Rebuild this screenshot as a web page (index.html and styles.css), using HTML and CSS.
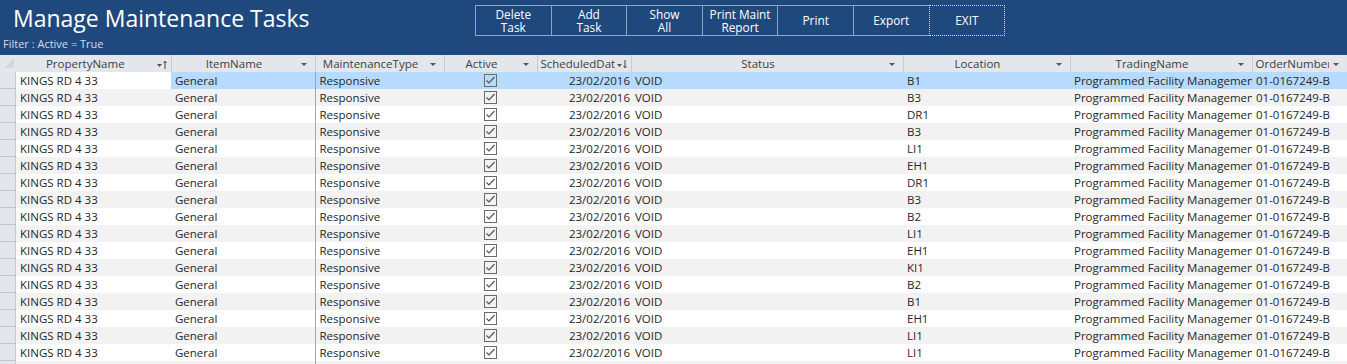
FILE: index.html
```html
<!DOCTYPE html>
<html lang="en">
<head>
  <meta charset="UTF-8" />
  <title>Manage Maintenance Tasks</title>
  <link rel="stylesheet" href="styles.css">
</head>
<body>
  <div class="header">
    <div class="titles">
      <h1>Manage Maintenance Tasks</h1>
      <div class="filter">Filter : Active = True</div>
    </div>
    <div class="buttons">
      <button>Delete<br>Task</button>
      <button>Add<br>Task</button>
      <button>Show<br>All</button>
      <button>Print Maint<br>Report</button>
      <button>Print</button>
      <button>Export</button>
      <button class="focused">EXIT</button>
    </div>
  </div>

  <table class="grid">
    <colgroup>
      <col style="width:16px">
      <col style="width:155px">
      <col style="width:144px">
      <col style="width:129px">
      <col style="width:93px">
      <col style="width:94px">
      <col style="width:272px">
      <col style="width:167px">
      <col style="width:182px">
      <col style="width:95px">
    </colgroup>
    <thead>
      <tr>
        <th class="corner"><svg width="16" height="16" viewBox="0 0 16 16"><polygon points="4,13 14,13 14,3" fill="#d4d7dc"/></svg></th>
        <th><div class="hd"><span class="lbl">PropertyName</span><svg class="sorter" width="11" height="9" viewBox="0 0 11 9"><polygon points="0,4 5,4 2.5,7" fill="#555"/><path d="M8 1.5V9M6.5 3L8 1.2 9.5 3" stroke="#444" fill="none"/></svg></div></th>
        <th><div class="hd"><span class="lbl">ItemName</span><i class="arr"></i></div></th>
        <th><div class="hd"><span class="lbl">MaintenanceType</span><i class="arr"></i></div></th>
        <th><div class="hd"><span class="lbl">Active</span><i class="arr"></i></div></th>
        <th><div class="hd"><span class="lbl clip">ScheduledDat</span><svg class="sorter" width="11" height="9" viewBox="0 0 11 9"><polygon points="0,4 5,4 2.5,7" fill="#555"/><path d="M8 0V7.5M6.5 6L8 7.8 9.5 6" stroke="#444" fill="none"/></svg></div></th>
        <th><div class="hd"><span class="lbl">Status</span><i class="arr"></i></div></th>
        <th><div class="hd"><span class="lbl">Location</span><i class="arr"></i></div></th>
        <th><div class="hd"><span class="lbl">TradingName</span><i class="arr"></i></div></th>
        <th><div class="hd"><span class="lbl clip">OrderNumber</span><i class="arr"></i></div></th>
      </tr>
    </thead>
    <tbody id="rows"></tbody>
  </table>

  <script>
    const lokasi = ["B1", "B3", "DR1", "B3", "LI1", "EH1", "DR1", "B3", "B2", "LI1", "EH1", "KI1", "B2", "B1", "EH1", "LI1", "LI1"];
    const tbody = document.getElementById("rows");
    const check = '<svg class="chk" width="13" height="13" viewBox="0 0 13 13"><rect x="0.5" y="0.5" width="12" height="12" fill="none" stroke="#6b6b6b"/><path d="M2.5 6.5L5 9 10.5 3" fill="none" stroke="#555" stroke-width="1.2"/></svg>';

    lokasi.forEach(function (loc, i) {
      const tr = document.createElement("tr");
      tr.className = i === 0 ? "selected" : (i % 2 ? "alt" : "");
      tr.innerHTML =
        '<td class="sel"></td>' +
        '<td class="' + (i === 0 ? "current" : "") + '">KINGS RD 4 33</td>' +
        '<td>General</td>' +
        '<td class="frozen">Responsive</td>' +
        '<td class="center">' + check + '</td>' +
        '<td class="right">23/02/2016</td>' +
        '<td>VOID</td>' +
        '<td>' + loc + '</td>' +
        '<td>Programmed Facility Management</td>' +
        '<td>01-0167249-B</td>';
      tbody.appendChild(tr);
    });

    // sisa baris yang terpotong di bawah
    const tail = document.createElement("tr");
    tail.className = "alt tail";
    tail.innerHTML = '<td class="sel"></td><td></td><td></td><td class="frozen"></td><td></td><td></td><td></td><td></td><td></td><td></td>';
    tbody.appendChild(tail);
  </script>
</body>
</html>
```

FILE: styles.css
```css
body {
  margin: 0;
  font-family: "Open Sans", "Noto Sans", Arial, sans-serif;
  background-color: #ffffff;
  overflow: hidden;
}

.header {
  height: 55px;
  background-color: #1f497d;
  display: flex;
}

.titles {
  width: 475px;
  flex-shrink: 0;
}

h1 {
  margin: 0;
  padding: 2px 0 0 13px;
  font-size: 23px;
  font-weight: normal;
  color: #ffffff;
  line-height: 32px;
}

.filter {
  padding: 3px 0 0 3px;
  font-size: 11px;
  color: #d3dceb;
  line-height: 14px;
}

.buttons {
  display: flex;
  margin-top: 5px;
  height: 31px;
}

button {
  width: 76.6px;
  height: 31px;
  margin-left: -1px;
  padding: 0;
  background-color: #1f497d;
  color: #ffffff;
  font-family: inherit;
  font-size: 11.8px;
  line-height: 13px;
  border: 1px solid #8ea6c4;
  cursor: pointer;
}

button:first-child {
  margin-left: 0;
}

button.focused {
  border: 1px dotted #d9d9d9;
}

.grid {
  table-layout: fixed;
  border-collapse: collapse;
  width: 1347px;
  font-size: 11.5px;
}

.grid th {
  height: 17px;
  padding: 0;
  background-color: #e3e6ea;
  border-right: 1px solid #c9ccd1;
  font-weight: normal;
  color: #404040;
}

.grid th.corner {
  border-right: none;
  vertical-align: top;
}

.corner svg {
  display: block;
  height: 16px;
}

.hd {
  display: flex;
  align-items: center;
  height: 17px;
  line-height: 17px;
}

.lbl {
  flex: 1;
  text-align: center;
  white-space: nowrap;
  overflow: hidden;
}

.lbl.clip {
  text-align: left;
  padding-left: 3px;
}

.arr {
  width: 0;
  height: 0;
  margin: 2px 8px 0 4px;
  border-left: 3px solid transparent;
  border-right: 3px solid transparent;
  border-top: 3px solid #555555;
}

.sorter {
  margin: 1px 3px 0 2px;
}

.grid td {
  height: 17px;
  padding: 0 0 0 4px;
  line-height: 17px;
  color: #262626;
  white-space: nowrap;
  overflow: hidden;
}

.grid td.sel {
  padding: 0;
  background-color: #e3e6ea;
  box-shadow: inset -1px -1px 0 #c3c6cb;
}

.grid td.frozen {
  border-left: 1px solid #a6a6a6;
}

.grid td.center {
  text-align: center;
  padding: 0;
}

.grid td.right {
  text-align: right;
  padding: 0 1px 0 0;
}

.chk {
  display: inline-block;
  vertical-align: middle;
  margin-top: -2px;
}

tr.alt td {
  background-color: #f2f2f2;
}

tr.selected td {
  background-color: #b7dbff;
}

tr.selected td.current {
  background-color: #ffffff;
}
```
